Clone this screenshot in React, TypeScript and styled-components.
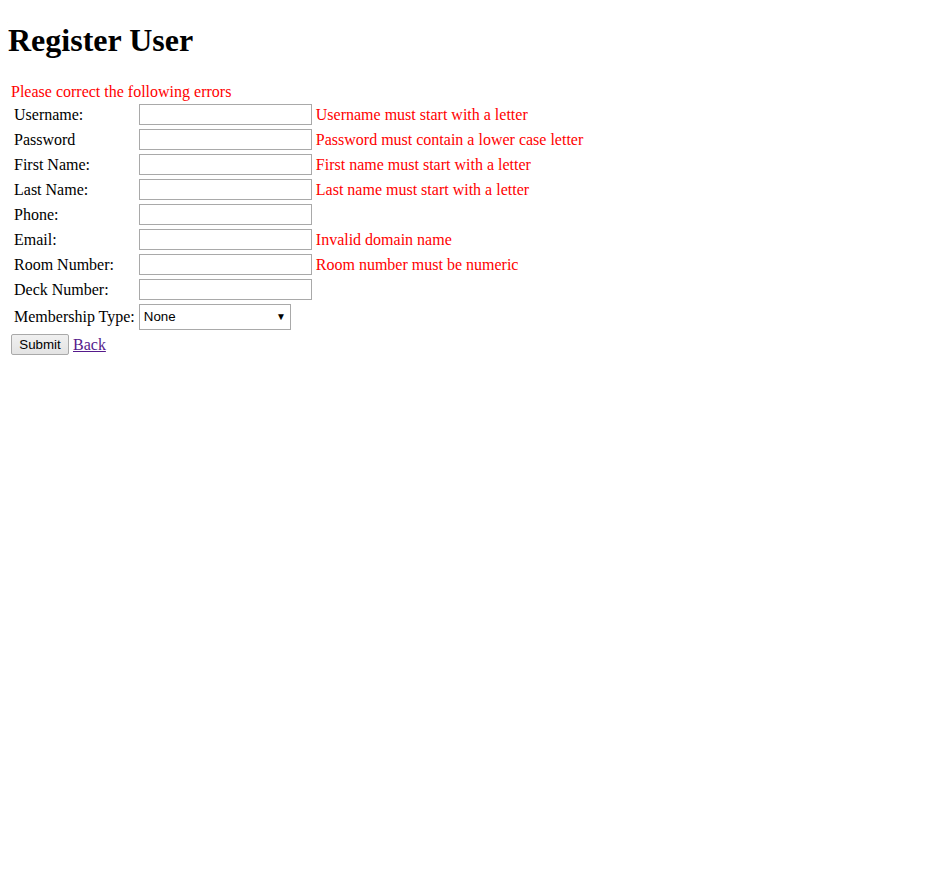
import React from "react";
import styled, { createGlobalStyle } from "styled-components";

const GlobalStyle = createGlobalStyle`
  body {
    margin: 8px;
    font-family: "Liberation Serif", "Times New Roman", serif;
    font-size: 16px;
    color: #000;
    background: #fff;
  }
`;

const Title = styled.h1`
  font-size: 32px;
  font-weight: bold;
  margin: 14px 0 25px;
  line-height: 37px;
`;

const Outer = styled.table`
  border-spacing: 2px;
  border-collapse: separate;
  margin-left: 0;
`;

const Cell = styled.td`
  padding: 1px;
  vertical-align: middle;
`;

const ErrorHead = styled.div`
  color: #ff0000;
  line-height: 18px;
  margin-top: -4px;
`;

const Fields = styled.table`
  border-spacing: 2px;
  border-collapse: separate;
  margin-left: 0;
`;

const Label = styled.td`
  padding: 1px;
  white-space: nowrap;
  vertical-align: middle;
`;

const InputCell = styled.td`
  padding: 1px;
  vertical-align: middle;
  line-height: 0;
`;

const ErrorCell = styled.td`
  padding: 1px;
  color: #ff0000;
  white-space: nowrap;
  vertical-align: middle;
`;

const TextBox = styled.input`
  box-sizing: border-box;
  width: 173px;
  height: 21px;
  border: 1px solid #a9a9a9;
  padding: 1px 2px;
  margin: 0;
  font: 13.33px Arial, "Liberation Sans", sans-serif;
  background: #fff;
`;

const SelectBox = styled.div`
  box-sizing: border-box;
  width: 152px;
  height: 26px;
  border: 1px solid #a9a9a9;
  display: flex;
  align-items: center;
  justify-content: space-between;
  padding: 0 4px 0 4px;
  font: 13.33px Arial, "Liberation Sans", sans-serif;
  line-height: 1;
  color: #000;
  background: #fff;
  margin: 0;
`;

const Arrow = styled.span`
  font-size: 10px;
`;

const Actions = styled.div`
  display: flex;
  align-items: center;
  gap: 4px;
  margin-top: 1px;
`;

const Button = styled.button`
  box-sizing: border-box;
  height: 21px;
  width: 58px;
  padding: 0;
  font: 13.33px Arial, "Liberation Sans", sans-serif;
  color: #000;
  background: linear-gradient(#f0f0f0, #e3e3e3);
  border: 1px solid #a9a9a9;
  border-radius: 2px;
`;

const BackLink = styled.a`
  color: #551a8b;
  text-decoration: underline;
  font-size: 16px;
`;

const rows: [string, string][] = [
  ["Username:", "Username must start with a letter"],
  ["Password", "Password must contain a lower case letter"],
  ["First Name:", "First name must start with a letter"],
  ["Last Name:", "Last name must start with a letter"],
  ["Phone:", ""],
  ["Email:", "Invalid domain name"],
  ["Room Number:", "Room number must be numeric"],
  ["Deck Number:", ""],
];

export default function App() {
  return (
    <>
      <GlobalStyle />
      <Title>Register User</Title>
      <Outer>
        <tbody>
          <tr>
            <Cell>
              <ErrorHead>Please correct the following errors</ErrorHead>
              <Fields>
                <tbody>
                  {rows.map(([label, err]) => (
                    <tr key={label}>
                      <Label>{label}</Label>
                      <InputCell>
                        <TextBox type="text" />
                      </InputCell>
                      <ErrorCell>{err}</ErrorCell>
                    </tr>
                  ))}
                  <tr>
                    <Label>Membership Type:</Label>
                    <InputCell>
                      <SelectBox>
                        <span>None</span>
                        <Arrow>▼</Arrow>
                      </SelectBox>
                    </InputCell>
                    <ErrorCell />
                  </tr>
                </tbody>
              </Fields>
              <Actions>
                <Button>Submit</Button>
                <BackLink href="#">Back</BackLink>
              </Actions>
            </Cell>
          </tr>
        </tbody>
      </Outer>
    </>
  );
}
